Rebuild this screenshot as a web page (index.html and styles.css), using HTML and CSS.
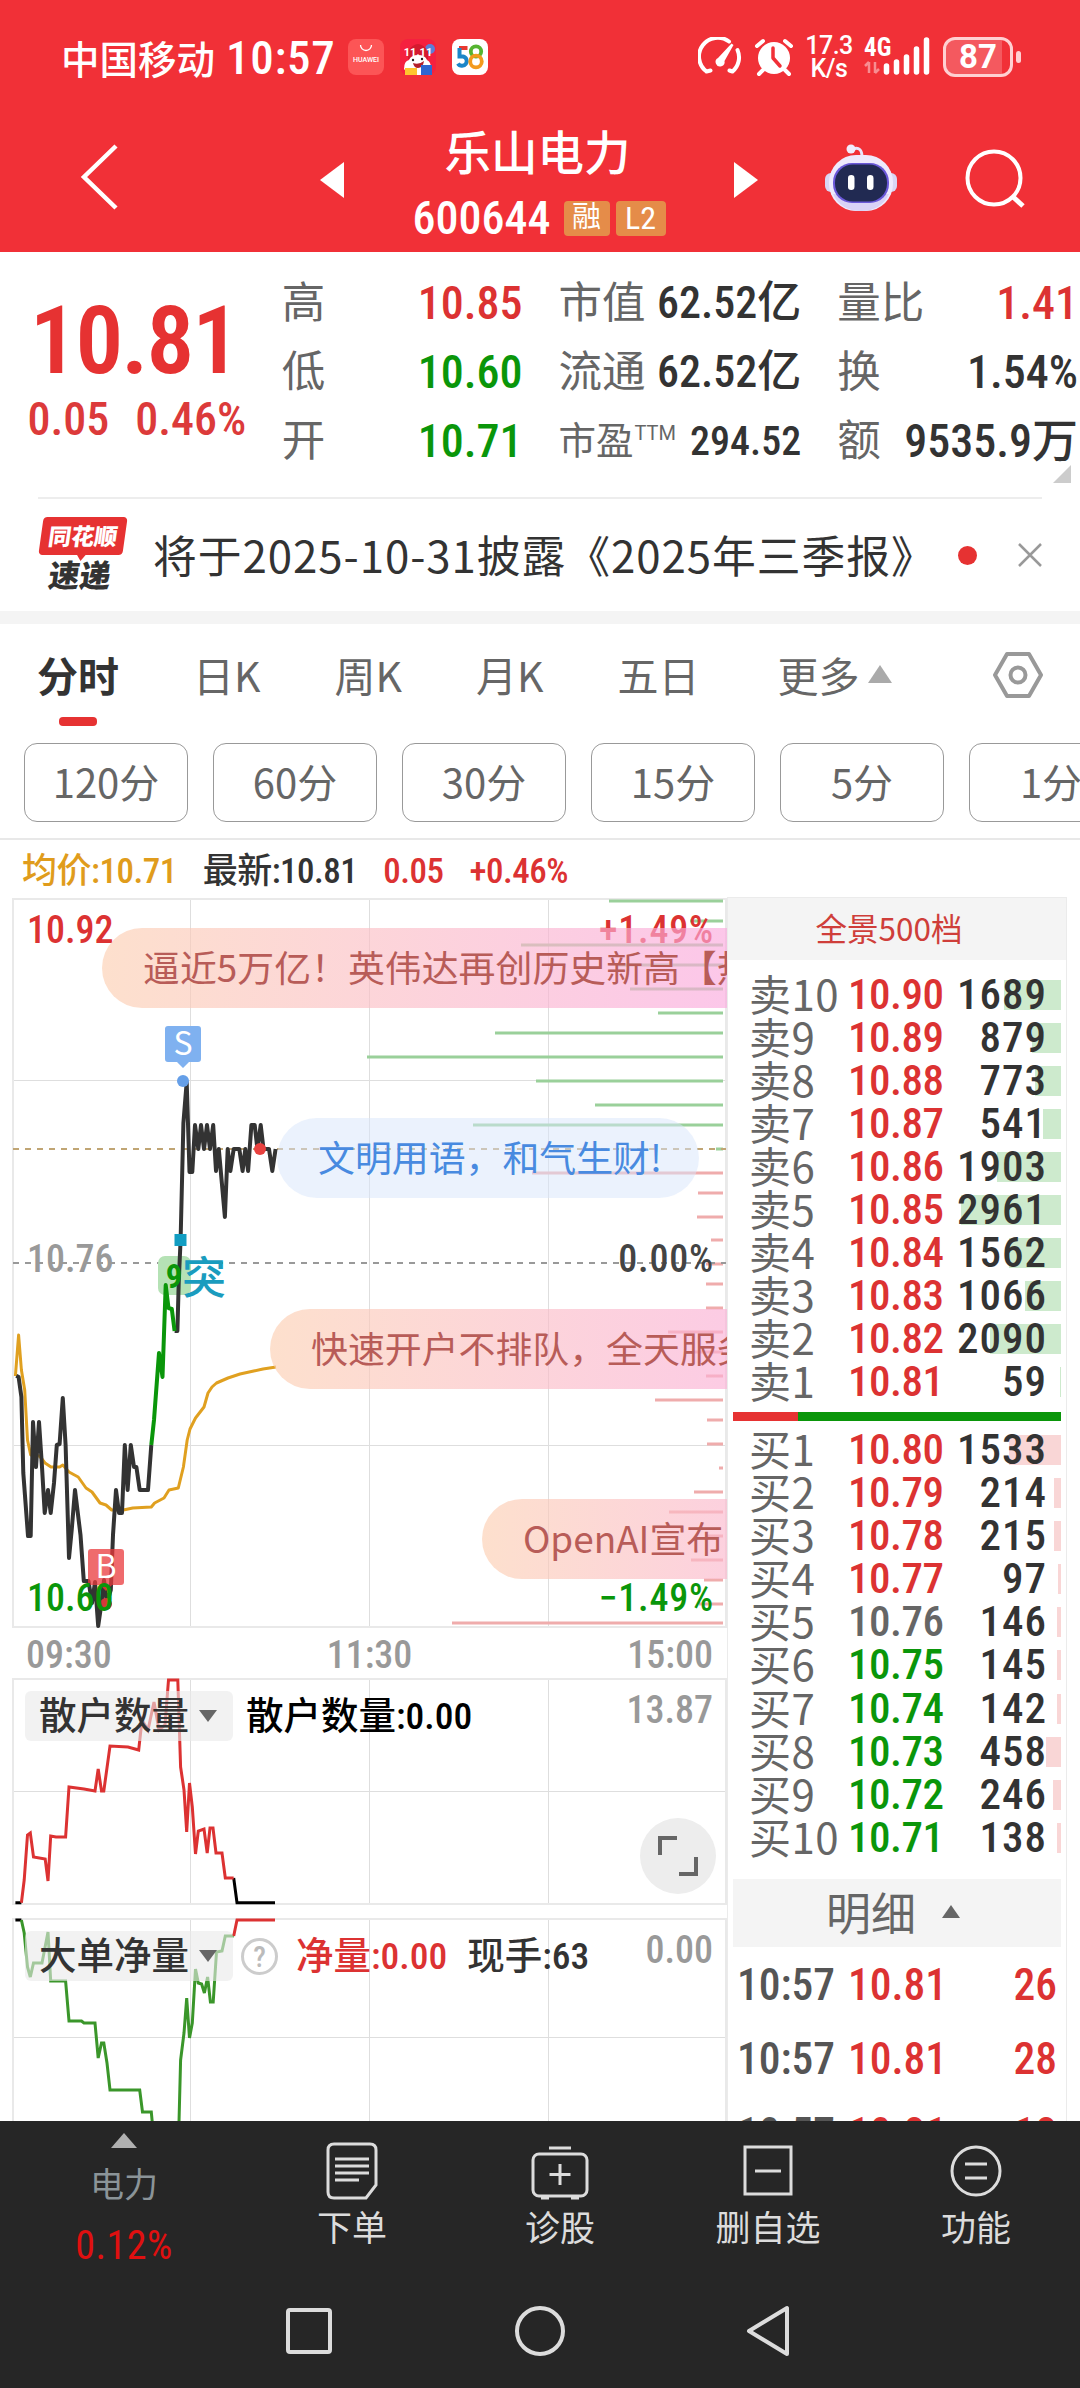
FILE: index.html
```html
<!DOCTYPE html>
<html lang="zh-CN">
<head>
  <meta charset="UTF-8">
  <title>乐山电力 600644</title>
  <link rel="stylesheet" href="styles.css">
</head>
<body>

  <header class="top">
    <div class="status">
      <span class="carrier">中国移动</span>
      <span class="clock">10:57</span>
      <div class="app-icons">
        <svg width="36" height="36" viewBox="0 0 36 36">
          <rect width="36" height="36" rx="8" fill="#fc5556"/>
          <path d="M12.500 6a5.500 5.500 0 0 0 11 0" fill="none" stroke="#fff" stroke-width="1.300"/>
          <text x="18" y="23" class="hw">HUAWEI</text>
        </svg>
        <svg width="36" height="36" viewBox="0 0 36 36">
          <rect width="36" height="36" rx="8" fill="#f5203f"/>
          <circle cx="30" cy="10" r="5" fill="#5a7fd8"/>
          <path d="M8 12q10-14 20 0v8H8z" fill="#d41a30"/>
          <path d="M4 30q0-8 5-9q2-5 9-5t9 5q4 2 4 8l-5 7H9z" fill="#fff"/>
          <path d="M13 24q6 2 11-2q-1 7-6 7q-4 0-5-5z" fill="#b3202c"/>
          <circle cx="13" cy="21" r="1.200" fill="#222"/><circle cx="22" cy="20" r="1.200" fill="#222"/>
          <rect x="5" y="29" width="12" height="7" fill="#ffc52e"/>
          <rect x="21" y="26" width="11" height="10" fill="#2e66d0"/>
          <text x="18" y="17" class="sale">11.11</text>
        </svg>
        <svg width="36" height="36" viewBox="0 0 36 36">
          <rect width="36" height="36" rx="8" fill="#fff"/>
          <path d="M15.500 9H7" fill="none" stroke="#e8382f" stroke-width="4"/>
          <path d="M7.500 9v8.500h3.500a4.700 4.700 0 1 1-5 7" fill="none" stroke="#1b86c8" stroke-width="4"/>
          <circle cx="24" cy="12.500" r="5.200" fill="none" stroke="#55b430" stroke-width="3.800"/>
          <circle cx="24" cy="22.500" r="5.800" fill="none" stroke="#f39a1e" stroke-width="3.800"/>
        </svg>
      </div>
      <div class="signals">
        <svg width="44" height="40" viewBox="0 0 44 40">
          <path d="M8.500 34.500A18.500 18.500 0 0 1 31 4.500M39.500 13a18.500 18.500 0 0 1-5 21.500M8.500 34.500l4-1M34.500 34.500l-3-1" fill="none" stroke="#fff" stroke-width="4" stroke-linecap="round"/>
          <path d="M33.500 6.500l2 1.500-9 16a4.500 4.500 0 1 1-6.500-3z" fill="#fff"/>
        </svg>
        <svg class="alarm" width="40" height="40" viewBox="0 0 40 40">
          <circle cx="20" cy="21" r="16" fill="#fff"/>
          <path d="M3 9l6-5M37 9l-6-5M9 33l-4 4M31 33l4 4" stroke="#fff" stroke-width="4" stroke-linecap="round"/>
          <path d="M19 11v10l7 8" fill="none" stroke="#f13037" stroke-width="3.500" stroke-linecap="round" stroke-linejoin="round"/>
        </svg>
        <div class="speed"><span>17.3</span><span>K/s</span></div>
        <svg width="68" height="42" viewBox="0 0 68 42">
          <text x="1" y="20" class="net">4G</text>
          <path d="M6 26v11M2 30l4-4M12 37V26M16 33l-4 4" stroke="#fff" stroke-width="2.500" opacity=".45" fill="none"/>
          <path d="M23.500 30v6M33.500 26v10M43.500 21v15M53.500 13v23M63.500 4v32" stroke="#fff" stroke-width="5.500" stroke-linecap="round"/>
        </svg>
        <div class="battery"><span>87</span></div>
      </div>
    </div>

    <div class="titlebar">
      <svg class="back" width="40" height="68" viewBox="0 0 40 68"><path d="M36 3L4 34l32 31" fill="none" stroke="#fff" stroke-width="4.500"/></svg>
      <svg class="prev" width="24" height="36" viewBox="0 0 24 36"><path d="M24 0v36L0 18z" fill="#fff"/></svg>
      <div class="stock">
        <div class="stock-name">乐山电力</div>
        <div class="stock-code">600644 <i class="tag">融</i><i class="tag">L2</i></div>
      </div>
      <svg class="next" width="24" height="36" viewBox="0 0 24 36"><path d="M0 0v36l24-18z" fill="#fff"/></svg>
      <svg class="robot" width="76" height="68" viewBox="0 0 76 68">
        <path d="M30 5q9-3 9 8" fill="none" stroke="#e9e4fb" stroke-width="3"/>
        <circle cx="28" cy="5" r="4.500" fill="#f1ecfd"/>
        <rect x="2" y="29" width="72" height="19" rx="6" fill="#d9d6f4"/>
        <rect x="6" y="11" width="64" height="56" rx="27" fill="#eeeafd"/>
        <path d="M10 50q8 17 28 17t28-17z" fill="#d9d2f6"/>
        <rect x="10" y="19" width="56" height="40" rx="19" fill="#6a58d8"/>
        <rect x="12" y="20.500" width="52" height="37" rx="18" fill="#212a52"/>
        <rect x="25" y="31" width="6.500" height="15" rx="3.200" fill="#fff"/>
        <rect x="44" y="31" width="6.500" height="15" rx="3.200" fill="#fff"/>
      </svg>
      <svg class="search" width="62" height="62" viewBox="0 0 62 62"><path d="M48 48l11 10" stroke="#fff" stroke-width="5"/><circle cx="30" cy="30" r="26.500" fill="none" stroke="#fff" stroke-width="4"/></svg>
    </div>
  </header>

  <section class="quote">
    <div class="last">
      <div class="price">10.81</div>
      <div class="change"><span>0.05</span><span>0.46%</span></div>
    </div>
    <dl class="col col-a">
      <dt>高</dt><dd class="up">10.85</dd>
      <dt>低</dt><dd class="down">10.60</dd>
      <dt>开</dt><dd class="down">10.71</dd>
    </dl>
    <dl class="col col-b">
      <dt>市值</dt><dd>62.52亿</dd>
      <dt>流通</dt><dd>62.52亿</dd>
      <dt class="small">市盈<sup>TTM</sup></dt><dd class="small">294.52</dd>
    </dl>
    <dl class="col col-c">
      <dt>量比</dt><dd class="up">1.41</dd>
      <dt>换</dt><dd>1.54%</dd>
      <dt>额</dt><dd>9535.9万</dd>
    </dl>
    <div class="corner"></div>
  </section>

  <section class="news">
    <div class="news-logo"><b class="brand"><span>同花顺</span></b><b class="express">速递</b></div>
    <p>将于2025-10-31披露《2025年三季报》</p>
    <span class="dot"></span>
    <svg width="26" height="26" viewBox="0 0 26 26"><path d="M2 2l22 22M24 2L2 24" stroke="#999" stroke-width="2.500"/></svg>
  </section>

  <nav class="tabs">
    <a class="active">分时</a>
    <a>日K</a>
    <a>周K</a>
    <a>月K</a>
    <a>五日</a>
    <a class="more">更多<i></i></a>
    <svg width="50" height="48" viewBox="0 0 50 48"><path d="M14 3h22l12 21-12 21H14L2 24z" fill="none" stroke="#999" stroke-width="4" stroke-linejoin="round"/><circle cx="25" cy="24" r="7.500" fill="none" stroke="#999" stroke-width="4"/></svg>
  </nav>

  <div class="periods">
    <button>120分</button>
    <button>60分</button>
    <button>30分</button>
    <button>15分</button>
    <button>5分</button>
    <button>1分</button>
  </div>

  <div class="legend">
    <span class="avg">均价:10.71</span>
    <span>最新:10.81</span>
    <span class="up">0.05</span>
    <span class="up">+0.46%</span>
  </div>

  <main class="board">
    <div class="charts">

      <div class="chart">
        <svg width="727" height="731" viewBox="0 897 727 731">
          <path class="grid" d="M190.500 898v730M369.500 898v730M548.500 898v730M13 1080.500h713M13 1445.500h713"/>
          <path class="frame" d="M13 899h713v728H13z"/>

          <path class="vol-up" d="M609 901h114M690 921h33M521 945h202M618 965h105M630 989h93M658 1013h65M495 1033h228M367 1057h356M536 1081h187M595 1105h128M473 1125h250M716 1149h7"/>
          <path class="vol-down" d="M532 1173h191M698 1193h25M697 1217h26M711 1240h12M706 1264h17M706 1284h17M706 1308h17M668 1332h55M692 1352h31M706 1376h17M655 1400h68M707 1420h16M707 1444h16M719 1468h4M694 1492h29M669 1512h54M706 1536h17M691 1560h32M704 1580h19M699 1604h24M452 1623h271"/>

          <path d="M13 1149h713" stroke="#c0a574" stroke-width="2" stroke-dasharray="6 6"/>
          <path d="M13 1263h713" stroke="#999" stroke-width="2" stroke-dasharray="6 6"/>

          <text class="lab up" x="27" y="943">10.92</text>
          <text class="lab up end" x="714" y="943">+1.49%</text>
          <text class="lab mid" x="27" y="1272">10.76</text>
          <text class="lab end" x="714" y="1272">0.00%</text>

          <rect x="158" y="1256" width="33" height="39" rx="7" fill="#b5e2b5"/>
          <polyline class="line avg-line" points="15.4,1376 18.6,1335 21.4,1370 24.7,1390 27.5,1440 30.7,1455 39.6,1456 45,1463 51,1467 59.6,1467 62.8,1465 69,1472 78.2,1477 86,1488 92,1492 100,1503 106,1505 111.7,1510 123.4,1510 132.7,1508 151.3,1507 154.6,1503 164,1498 169,1490 178.3,1488 183.4,1467 187.2,1440 190,1429 195.5,1418 204,1407 208,1393 212,1387 216.5,1383 228,1378 240,1374 253.7,1371 263,1369 276,1367"/>
          <polyline class="line price-line" points="16.3,1375.7 18.6,1377 21.4,1397 23.3,1473 28,1536 30.7,1536 33,1422 36,1467 39,1422 42,1467 44.7,1513 48,1490 50.7,1513 54,1483 56.8,1445 59.6,1444 62.8,1398 65.6,1445 69,1558 71.7,1530 75,1490 80.5,1535 83.8,1581 88.5,1581 92,1603 95,1582 98.2,1626 101.5,1603 104,1580 107,1603 110.8,1590 113,1535 116,1490 119,1513 122,1513 124.8,1445 127.6,1490 130.8,1445 134,1467 136.4,1467 139.7,1490 148,1490 151.3,1445"/>
          <polyline class="line price-line" points="174.6,1331 177.4,1331 178.8,1280 180.6,1240 183.4,1123 186.7,1082 189.5,1172 192.3,1172 195,1125 198.3,1149 201,1125 204,1149 207,1125 210,1149 213.2,1125 216,1171 218.8,1149 224.9,1217 227.7,1149 230.4,1171 233.7,1149 239.3,1149 242.6,1171 245.3,1149 248.1,1171 251.4,1125 254.7,1125 257.4,1149 260.7,1125 263.5,1149 269,1149 272.3,1171 275.6,1149"/>
          <polyline class="line signal-line" points="151.3,1445 154,1420 159,1353 162.5,1377 165.7,1285 168.500,1308 171.8,1309 174.6,1331"/>

          <path d="M168 1026h30q3 0 3 3v30q0 3-3 3h-9l-6 6-6-6h-9q-3 0-3-3v-30q0-3 3-3z" fill="#7fb1f0"/>
          <text class="mark" x="183" y="1055">S</text>
          <circle cx="183" cy="1081" r="6" fill="#659fe8"/>
          <rect x="174.500" y="1234" width="12" height="12" fill="#129dc2"/>
          <text class="nine" x="174" y="1288">9</text>
          <text class="burst" x="182" y="1294">突</text>
          <circle cx="260" cy="1149" r="6" fill="#e8413f"/>

          <rect x="88" y="1549" width="36" height="36" rx="3" fill="#e93a3c" opacity=".75"/>
          <path d="M100 1585h12l-6 6z" fill="#c33"/>
          <circle cx="106" cy="1604" r="6" fill="#d6383a"/>
          <text class="mark" x="106" y="1578">B</text>
          <text class="lab down" x="27" y="1611">10.60</text>
          <text class="lab down end" x="714" y="1611">−1.49%</text>
        </svg>
        <div class="bullet b1">逼近5万亿！英伟达再创历史新高【热</div>
        <div class="bullet b2">文明用语，和气生财!</div>
        <div class="bullet b3">快速开户不排队，全天服务</div>
        <div class="bullet b4">OpenAI宣布</div>
      </div>

      <div class="axis"><span>09:30</span><span>11:30</span><span>15:00</span></div>

      <div class="indicator">
        <svg width="727" height="228" viewBox="0 1678 727 228">
          <path class="grid" d="M190.500 1678v227M369.500 1678v227M548.500 1678v227M13 1791.500h713"/>
          <path class="frame" d="M13 1679h713v225H13z"/>
          <path class="thin" stroke="#000" d="M15.400 1902.700h6M233.700 1878l3.300 24.700h38"/>
          <polyline class="thin" stroke="#dc3232" points="21.4,1902.7 24.2,1880 27.5,1835 30.3,1833 33.5,1857 45.2,1859 48,1881 50.7,1836 56,1837 65.6,1837 69,1787 84,1789 95,1791 98.2,1769 101.5,1791 103.8,1791 110,1746 128,1747 138.7,1750 142,1720 148,1730 154,1702 159,1730 165,1725 168.5,1680 177.8,1680 180.6,1767 184,1790 186.7,1832 189.5,1783 192.3,1807 195.5,1854 198.3,1831 204,1829 207.2,1853 210,1828 213,1828 216,1853 222,1853 225.3,1878 233.7,1878"/>
        </svg>
        <div class="ind-head">
          <span class="picker">散户数量<i></i></span>
          <span class="black">散户数量:0.00</span>
          <span class="max">13.87</span>
        </div>
        <div class="expand"><svg width="40" height="40" viewBox="0 0 40 40"><path d="M2 19V2h17M21 38h17V21" fill="none" stroke="#666" stroke-width="4"/></svg></div>
      </div>

      <div class="indicator second">
        <svg width="727" height="204" viewBox="0 1918 727 204">
          <path class="grid" d="M190.500 1918v204M369.500 1918v204M548.500 1918v204M13 2037.500h713"/>
          <path class="frame" d="M13 2130V1919h713v211"/>
          <path class="thin" stroke="#000" d="M15.400 1920h6"/>
          <polyline class="thin" stroke="#3a962a" points="21.4,1920 24.2,1933 27.5,1967 30.3,1977 33.5,1963 42,1963 48,1932 50.7,1981 65.6,1981 69,2021 81.5,2021 84,2023 95,2023 98.2,2058 101.5,2043 103.8,2043 107,2063 110,2090 139.7,2090 142.5,2112 151.3,2112 153,2130 178.8,2130 180.6,2060 184,2033 186.7,1998 189.5,2038 192.3,2023 195.5,1969 198.3,1983 201.6,1984 204.4,1993 207.6,1977 210.4,2002 213.2,2002 216.5,1952 222,1951 225.3,1936 233.7,1936"/>
          <path class="thin" stroke="#dc3232" d="M233.700 1936l3.300-16h38"/>
        </svg>
        <div class="ind-head">
          <span class="picker">大单净量<i></i></span>
          <span class="help">?</span>
          <span class="up">净量:0.00</span>
          <span class="hand">现手:63</span>
          <span class="max">0.00</span>
        </div>
      </div>
    </div>

    <aside class="book">
      <div class="book-head">全景500档</div>
      <div class="orders sell">
        <div class="row"><span>卖10</span><b class="up">10.90</b><em>1689</em><i style="width:57px"></i></div>
        <div class="row"><span>卖9</span><b class="up">10.89</b><em>879</em><i style="width:29px"></i></div>
        <div class="row"><span>卖8</span><b class="up">10.88</b><em>773</em><i style="width:26px"></i></div>
        <div class="row"><span>卖7</span><b class="up">10.87</b><em>541</em><i style="width:18px"></i></div>
        <div class="row"><span>卖6</span><b class="up">10.86</b><em>1903</em><i style="width:64px"></i></div>
        <div class="row"><span>卖5</span><b class="up">10.85</b><em>2961</em><i style="width:100px"></i></div>
        <div class="row"><span>卖4</span><b class="up">10.84</b><em>1562</em><i style="width:52px"></i></div>
        <div class="row"><span>卖3</span><b class="up">10.83</b><em>1066</em><i style="width:36px"></i></div>
        <div class="row"><span>卖2</span><b class="up">10.82</b><em>2090</em><i style="width:71px"></i></div>
        <div class="row"><span>卖1</span><b class="up">10.81</b><em>59</em><i style="width:1px"></i></div>
      </div>
      <div class="ratio"><i></i></div>
      <div class="orders buy">
        <div class="row"><span>买1</span><b class="up">10.80</b><em>1533</em><i style="width:52px"></i></div>
        <div class="row"><span>买2</span><b class="up">10.79</b><em>214</em><i style="width:7px"></i></div>
        <div class="row"><span>买3</span><b class="up">10.78</b><em>215</em><i style="width:7px"></i></div>
        <div class="row"><span>买4</span><b class="up">10.77</b><em>97</em><i style="width:3px"></i></div>
        <div class="row"><span>买5</span><b class="flat">10.76</b><em>146</em><i style="width:4px"></i></div>
        <div class="row"><span>买6</span><b class="down">10.75</b><em>145</em><i style="width:4px"></i></div>
        <div class="row"><span>买7</span><b class="down">10.74</b><em>142</em><i style="width:4px"></i></div>
        <div class="row"><span>买8</span><b class="down">10.73</b><em>458</em><i style="width:15px"></i></div>
        <div class="row"><span>买9</span><b class="down">10.72</b><em>246</em><i style="width:8px"></i></div>
        <div class="row"><span>买10</span><b class="down">10.71</b><em>138</em><i style="width:4px"></i></div>
      </div>
      <div class="detail-head">明细<i></i></div>
      <div class="trades">
        <div class="trade"><span>10:57</span><b>10.81</b><b>26</b></div>
        <div class="trade"><span>10:57</span><b>10.81</b><b>28</b></div>
        <div class="trade"><span>10:57</span><b>10.81</b><b>18</b></div>
      </div>
    </aside>
  </main>

  <footer class="bottom">
    <div class="actions">
      <div class="sector"><i></i><span>电力</span><b>0.12%</b></div>
      <div class="action">
        <svg width="60" height="58" viewBox="0 0 60 58"><path d="M12 2h36q6 0 6 6v35L44 56H12q-6 0-6-6V8q0-6 6-6z"/><path d="M13 17h34M13 24h34M13 31h34M13 38h24"/></svg>
        <span>下单</span>
      </div>
      <div class="action">
        <svg width="60" height="58" viewBox="0 0 60 58"><rect x="3" y="12" width="54" height="42" rx="6"/><path d="M19 6h22M30 22v21M19.500 32.500h21M11 56h8M41 56h8"/></svg>
        <span>诊股</span>
      </div>
      <div class="action">
        <svg width="60" height="58" viewBox="0 0 60 58"><rect x="7" y="5" width="46" height="47"/><path d="M17 29h26"/></svg>
        <span>删自选</span>
      </div>
      <div class="action">
        <svg width="60" height="58" viewBox="0 0 60 58"><circle cx="30" cy="29" r="24"/><path d="M19 22h22M19 36h22"/></svg>
        <span>功能</span>
      </div>
    </div>
    <div class="system">
      <svg width="54" height="54" viewBox="0 0 54 54"><rect x="6" y="6" width="42" height="42" rx="2"/></svg>
      <svg width="54" height="54" viewBox="0 0 54 54"><circle cx="27" cy="27" r="23"/></svg>
      <svg width="54" height="54" viewBox="0 0 54 54"><path d="M43 4v46L5 27z"/></svg>
    </div>
  </footer>

</body>
</html>
```
FILE: styles.css
```css
* {
  box-sizing: border-box;
}

body {
  margin: 0;
  width: 1080px;
  height: 2388px;
  overflow: hidden;
  background: #fff;
  color: #333;
  font-family: Roboto, "Noto Sans CJK SC", sans-serif;
  font-stretch: 75%;
}

svg {
  display: block;
  flex: none;
}

i, em {
  font-style: normal;
}

.up {
  color: #dc3232;
  fill: #dc3232;
}

.down {
  color: #0a960a;
  fill: #0a960a;
}

/* header */
.top {
  height: 252px;
  background: #f13037;
  color: #fff;
}

.status {
  display: flex;
  align-items: center;
  height: 114px;
  padding: 0 67px 0 61px;
}

.carrier {
  font-size: 38.500px;
  font-weight: 500;
}

.clock {
  margin-left: 11px;
  font-size: 47px;
  font-weight: 500;
  letter-spacing: 0.700px;
}

.app-icons {
  display: flex;
  gap: 16px;
  margin-left: 12px;
}

.hw {
  font: 500 7px Roboto, sans-serif;
  fill: #fff;
  text-anchor: middle;
}

.sale {
  font: 700 11px Roboto, sans-serif;
  fill: #fff;
  text-anchor: middle;
}

.signals {
  display: flex;
  align-items: center;
  margin-left: auto;
}

.alarm {
  margin-left: 12px;
}

.speed {
  display: flex;
  flex-direction: column;
  align-items: center;
  width: 46px;
  margin: 0 11px 0 12px;
  font-size: 25px;
  font-weight: 500;
  line-height: 23px;
  font-stretch: 100%;
  letter-spacing: -0.500px;
}

.net {
  font-size: 25px;
  font-weight: 700;
  fill: #fff;
}

.battery {
  position: relative;
  width: 70px;
  height: 40px;
  margin-left: 12px;
  border: 3px solid #ffd0d2;
  border-radius: 12px;
  background: linear-gradient(90deg, #f4595f 56px, #f13037 56px);
  font-size: 33px;
  font-weight: 700;
  line-height: 34px;
  text-align: center;
  font-stretch: 100%;
}

.battery::after {
  content: "";
  position: absolute;
  right: -11px;
  top: 11px;
  width: 5px;
  height: 12px;
  border-radius: 3px;
  background: #ffd0d2;
}

.titlebar {
  display: flex;
  align-items: flex-start;
  padding: 10px 54px 0 80px;
}

.back {
  margin-top: 19px;
}

.prev {
  margin: 38px 0 0 200px;
}

.stock {
  width: 390px;
  text-align: center;
}

.stock-name {
  padding: 2px 3px 0 0;
  font-size: 46.500px;
  font-weight: 500;
  line-height: 56px;
}

.stock-code {
  display: flex;
  align-items: center;
  justify-content: center;
  height: 66px;
  margin-top: 3px;
  font-size: 46px;
  font-weight: 500;
}

.tag {
  width: 46px;
  height: 35px;
  margin-left: 13px;
  border-radius: 4px;
  background: #e58c49;
  font-size: 29px;
  font-weight: 400;
  line-height: 33px;
}

.tag + .tag {
  width: 50px;
  margin-left: 6px;
  font-size: 32px;
  line-height: 35px;
}

.next {
  margin-top: 38px;
}

.robot {
  margin: 20px 0 0 65px;
}

.search {
  margin: 24px 0 0 auto;
}

/* quote */
.quote {
  position: relative;
  display: flex;
  height: 247px;
  margin: 0 2px 0 0;
  padding-top: 17px;
}

.quote::after {
  content: "";
  position: absolute;
  left: 38px;
  right: 36px;
  bottom: 0;
  height: 2px;
  background: #ededed;
}

.last {
  width: 262px;
  margin-right: 20px;
  color: #e63232;
  text-align: center;
}

.price {
  margin-top: 22px;
  padding-left: 6px;
  font-size: 95px;
  font-weight: 600;
  line-height: 100px;
  letter-spacing: -2px;
}

.change {
  display: flex;
  justify-content: center;
  gap: 26px;
  padding-left: 12px;
  margin-top: 1px;
  font-size: 46px;
  font-weight: 500;
  line-height: 54px;
}

.last .change {
  color: #dc3a3a;
}

.col {
  display: grid;
  grid-template-columns: auto 1fr;
  grid-auto-rows: 69px;
  align-items: center;
  margin: 0;
  line-height: 69px;
  white-space: nowrap;
}

.col dt {
  width: 0;
  font-size: 43.500px;
  color: #666;
}

.col dd {
  margin: 0;
  font-size: 46px;
  font-weight: 500;
  text-align: right;
}

.col-a {
  width: 241px;
}

.col-b {
  width: 243px;
  margin-left: 36px;
}

.col-c {
  width: 241px;
  margin-left: 36px;
}

.col-b dd {
  font-size: 44px;
}

.col .small {
  font-size: 37.500px;
}

.col dd.small {
  font-size: 40px;
}

.small sup {
  margin-left: 1px;
  font-size: 20px;
  font-stretch: 100%;
  line-height: 0;
  vertical-align: 14px;
}

.corner {
  position: absolute;
  right: 7px;
  bottom: 16px;
  width: 18px;
  height: 18px;
  background: #ccc;
  clip-path: polygon(100% 0, 100% 100%, 0 100%);
}

/* news */
.news {
  display: flex;
  align-items: center;
  height: 125px;
  padding: 0 37px 0 39px;
  border-bottom: 13px solid #f4f4f4;
}

.news-logo {
  display: flex;
  flex-direction: column;
  align-items: center;
  width: 88px;
  margin-right: 26px;
  font-family: "Noto Sans CJK SC", sans-serif;
  font-weight: 900;
}

.brand {
  position: relative;
  width: 84px;
  height: 38px;
  border-radius: 4px;
  background: #e63232;
  color: #fff;
  font-size: 23px;
  line-height: 36px;
  text-align: center;
  transform: skewX(-8deg);
}

.brand::after {
  content: "";
  position: absolute;
  left: 38px;
  bottom: -6px;
  border: 5px solid transparent;
  border-top: 7px solid #e63232;
  border-bottom: 0;
}

.express {
  margin-left: -6px;
  font-size: 31px;
  line-height: 38px;
  transform: skewX(-8deg);
}

.news p {
  margin: 0 0 3px;
  font-family: "Noto Sans CJK SC", sans-serif;
  font-size: 43.800px;
  line-height: 60px;
  letter-spacing: 0.950px;
  white-space: nowrap;
}

.dot {
  width: 19px;
  height: 19px;
  margin-left: auto;
  border-radius: 50%;
  background: #e63232;
}

.news > svg {
  margin-left: 40px;
}

/* chart tabs */
.tabs {
  display: flex;
  align-items: center;
  height: 106px;
  padding: 0 37px 6px;
  font-family: "Noto Sans CJK SC", sans-serif;
  font-size: 41px;
  color: #666;
}

.tabs a {
  position: relative;
  margin-right: 74px;
  line-height: 60px;
  white-space: nowrap;
}

.tabs .active {
  color: #333;
  font-weight: 700;
}

.tabs .active::after {
  content: "";
  position: absolute;
  left: 22px;
  bottom: -22px;
  width: 38px;
  height: 9px;
  border-radius: 4px;
  background: #e63232;
}

.tabs .more {
  display: flex;
  align-items: center;
  margin: 0 0 0 4px;
}

.more i {
  margin-left: 8px;
  border: 12px solid transparent;
  border-top: 0;
  border-bottom: 18px solid #aaa;
}

.tabs svg {
  margin: 2px 0 0 auto;
}

.periods {
  display: flex;
  gap: 25px;
  height: 110px;
  padding: 13px 0 0 24px;
  border-bottom: 2px solid #e8e8e8;
  overflow: hidden;
}

.periods button {
  flex: none;
  width: 164px;
  height: 79px;
  padding: 0 0 4px;
  border: 1.500px solid #999;
  border-radius: 13px;
  background: #fff;
  color: #666;
  font-family: "Noto Sans CJK SC", sans-serif;
  font-size: 40px;
}

.legend {
  display: flex;
  gap: 26px;
  height: 57px;
  padding: 4px 22px 0;
  font-size: 35px;
  font-weight: 500;
  line-height: 56px;
  letter-spacing: -0.500px;
}

.avg {
  color: #e09c1c;
}

/* board */
.board {
  display: flex;
  height: 1224px;
  overflow: hidden;
}

.charts {
  width: 727px;
}

.chart {
  position: relative;
  overflow: hidden;
}

.grid {
  fill: none;
  stroke: #dedede;
  stroke-width: 1;
}

.frame {
  fill: none;
  stroke: #e9e9e9;
  stroke-width: 2;
}

.vol-up {
  stroke: #9ad09a;
  stroke-width: 3;
}

.vol-down {
  stroke: #efacac;
  stroke-width: 3;
}

.line {
  fill: none;
  stroke-width: 4;
  stroke-linejoin: round;
}

.price-line {
  stroke: #333;
}

.signal-line {
  stroke: #0a960a;
}

.avg-line {
  stroke: #e0a020;
  stroke-width: 3;
}

.lab {
  font-size: 38px;
  font-weight: 500;
}

.lab:not(.up):not(.down) {
  fill: #444;
}

.lab.mid:not(.up) {
  fill: #999;
}

.end {
  text-anchor: end;
  letter-spacing: 0.800px;
}

.mark {
  font: 32px "Noto Sans CJK SC", sans-serif;
  fill: #fff;
  text-anchor: middle;
}

.nine {
  font-size: 33px;
  font-weight: 700;
  fill: #0a960a;
  text-anchor: middle;
}

.burst {
  font-size: 44px;
  font-weight: 500;
  fill: #1a9cbe;
}

.bullet {
  position: absolute;
  height: 80px;
  padding: 0 41px;
  border-radius: 40px;
  background: linear-gradient(90deg, rgba(252, 207, 178, .65), rgba(250, 165, 226, .65));
  color: #b85c58;
  font-family: "Noto Sans CJK SC", sans-serif;
  font-size: 36.900px;
  line-height: 76px;
  white-space: nowrap;
}

.b1 {
  left: 102px;
  top: 31px;
  width: 690px;
}

.b2 {
  left: 277px;
  top: 221px;
  width: 422px;
  background: rgba(215, 230, 252, .5);
  color: #488ae0;
}

.b3 {
  left: 270px;
  top: 412px;
  width: 620px;
}

.b4 {
  left: 482px;
  top: 602px;
  width: 440px;
}

.axis {
  display: flex;
  justify-content: space-between;
  height: 50px;
  padding: 0 14px 0 26px;
  color: #999;
  font-size: 38px;
  font-weight: 500;
  line-height: 54px;
}

.indicator {
  position: relative;
}

.second {
  margin-top: 12px;
}

.thin {
  fill: none;
  stroke-width: 3;
}

.ind-head {
  position: absolute;
  left: 25px;
  right: 14px;
  top: 13px;
  display: flex;
  align-items: center;
  font-size: 37.500px;
  font-weight: 500;
  line-height: 50px;
}

.picker {
  display: flex;
  align-items: center;
  width: 208px;
  height: 50px;
  margin-right: 13px;
  padding-left: 14px;
  border-radius: 6px;
  background: rgba(234, 234, 234, .6);
}

.picker i {
  margin-left: 10px;
  border: 9px solid transparent;
  border-top: 12px solid #666;
  border-bottom: 0;
}

.black {
  color: #000;
}

.help {
  width: 37px;
  height: 37px;
  margin: 0 18px 0 -5px;
  border: 3px solid #ccc;
  border-radius: 50%;
  color: #bbb;
  font-size: 29px;
  line-height: 32px;
  text-align: center;
}

.hand {
  margin-left: 20px;
}

.max {
  margin-left: auto;
  padding-bottom: 12px;
  color: #999;
  font-size: 38px;
  font-weight: 500;
  line-height: 38px;
}

.expand {
  position: absolute;
  left: 640px;
  top: 140px;
  display: grid;
  place-items: center;
  width: 76px;
  height: 76px;
  border-radius: 50%;
  background: #ededed;
}

/* order book */
.book {
  width: 340px;
  border: 1px solid #ebebeb;
  border-bottom: 0;
}

.book-head {
  height: 62px;
  margin-bottom: 12.500px;
  padding-right: 16px;
  background: #f4f4f4;
  color: #cf3e3a;
  font-family: "Noto Sans CJK SC", sans-serif;
  font-size: 31.500px;
  line-height: 59px;
  text-align: center;
}

.row {
  position: relative;
  display: flex;
  align-items: center;
  height: 43.070px;
  padding: 0 19px 0 21px;
  line-height: 43px;
}

.row span {
  width: 99px;
  padding-bottom: 4px;
  color: #666;
  font-family: "Noto Sans CJK SC", sans-serif;
  font-size: 42px;
  letter-spacing: 0.500px;
  white-space: nowrap;
}

.row b, .row em {
  position: relative;
  z-index: 1;
  font-size: 43px;
  font-weight: 500;
}

.row b {
  letter-spacing: -0.500px;
}

.row em {
  margin-left: auto;
  letter-spacing: 1px;
}

.row i {
  position: absolute;
  right: 5px;
  top: 7px;
  height: 30px;
  background: #cdeacd;
}

.buy .row i {
  background: #f9d6d6;
}

.flat {
  color: #666;
}

.ratio {
  height: 9px;
  margin: 9px 5px 7px;
  background: #0a960a;
}

.ratio i {
  display: block;
  width: 65px;
  height: 9px;
  background: #e63232;
}

.detail-head {
  display: flex;
  align-items: center;
  justify-content: center;
  height: 68px;
  margin: 20px 5px 0;
  padding: 0 8px 2px 0;
  background: #f4f4f4;
  color: #666;
  font-family: "Noto Sans CJK SC", sans-serif;
  font-size: 45px;
}

.detail-head i {
  margin-left: 26px;
  border: 9px solid transparent;
  border-top: 0;
  border-bottom: 13px solid #666;
}

.trade {
  display: flex;
  height: 74.600px;
  padding: 0 9px 0 9px;
  font-size: 43.500px;
  line-height: 77px;
  color: #dc3232;
}

.trade span {
  width: 111px;
  color: #555;
  font-weight: 500;
}

.trade b {
  font-weight: 500;
}

.trade b:last-child {
  margin-left: auto;
}

/* bottom bars */
.bottom {
  height: 267px;
  background: #262626;
  color: #dcdcdc;
}

.bottom svg {
  fill: none;
  stroke: #dcdcdc;
  stroke-width: 3;
}

.actions {
  display: flex;
  height: 170px;
}

.sector {
  display: flex;
  flex-direction: column;
  align-items: center;
  width: 248px;
  padding-top: 12px;
}

.sector i {
  border: 13px solid transparent;
  border-top: 0;
  border-bottom: 15px solid #b0b0b0;
}

.sector span {
  margin-top: 13px;
  color: #8b9498;
  font-size: 34px;
  line-height: 48px;
}

.sector b {
  margin-top: 14px;
  color: #e01010;
  font-size: 40px;
  font-weight: 400;
  line-height: 46px;
  letter-spacing: 0.500px;
}

.action {
  display: flex;
  flex-direction: column;
  align-items: center;
  width: 208px;
  padding-top: 21px;
}

.action span {
  margin-top: 5px;
  font-size: 35px;
  line-height: 50px;
}

.system {
  display: flex;
  justify-content: center;
  gap: 177px;
  padding-top: 13px;
}

.system svg {
  stroke-width: 4;
  stroke-linejoin: round;
}
```
